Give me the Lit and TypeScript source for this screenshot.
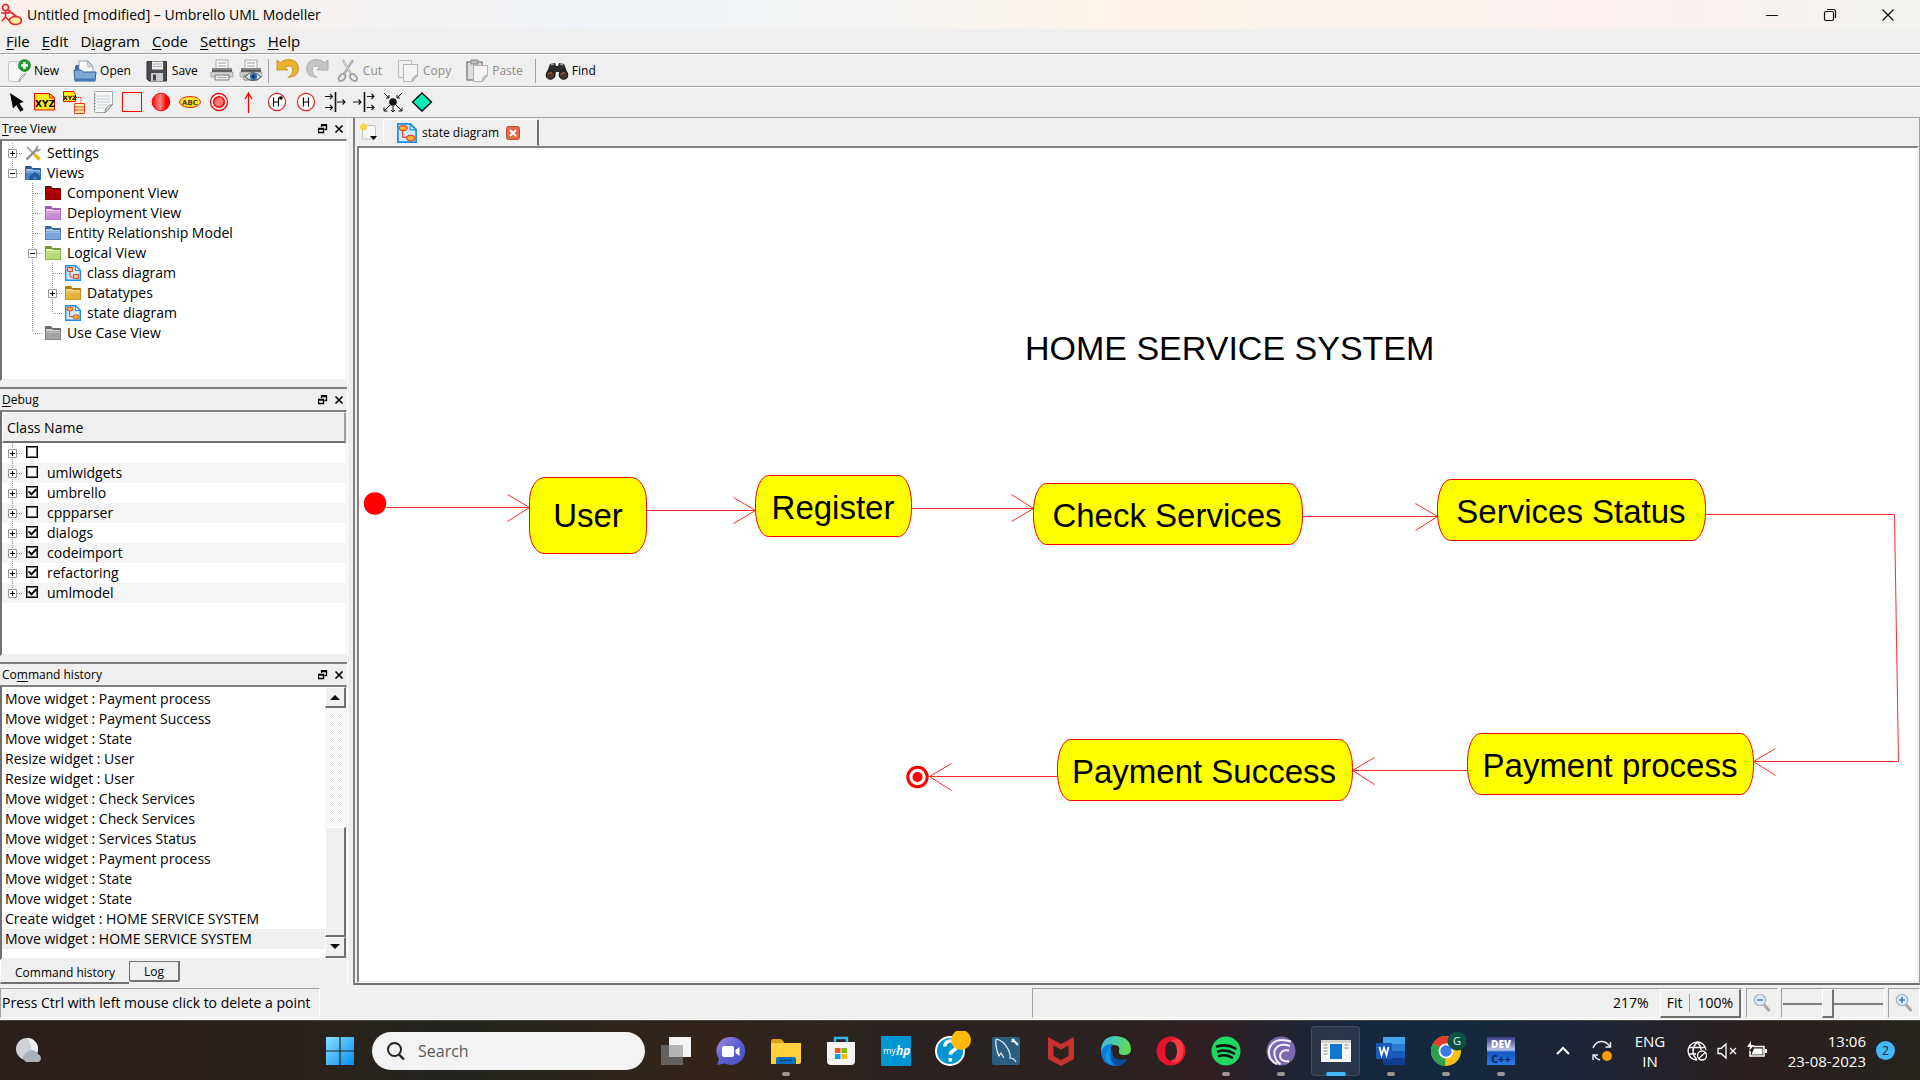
import { LitElement, html, svg, css, TemplateResult } from "lit";
import { customElement, property, state } from "lit/decorators.js";
import { classMap } from "lit/directives/class-map.js";

const icon = (w: number, h: number, body: TemplateResult) =>
  html`<svg width=${w} height=${h} viewBox="0 0 ${w} ${h}" aria-hidden="true">${body}</svg>`;

/* ---------- icons: 24px toolbar set ---------- */

const printer = svg`
  <path d="M6 1h12v9H6z" fill="#fafafa" stroke="#aaa"/><path d="M8 4h8M8 7h8" stroke="#999"/>
  <path d="M2 9h20v5H2z" fill="#555"/><path d="M2 9h20v2H2z" fill="#888"/>
  <path d="M1 13h22v5H1z" fill="#d4d4d4" stroke="#888" stroke-width=".6"/>
  <path d="M5 16h14v5H5z" fill="#eee" stroke="#777"/><path d="M7 18.5h10" stroke="#aaa"/>`;

const ICONS: Record<string, TemplateResult> = {
  new: icon(24, 24, svg`
    <path d="M1.500 4.500q0-2 2-2h15v12l-6 8h-9q-2 0-2-2z" fill="#f4f5f4" stroke="#c4c6c4"/>
    <path d="M12 22.500q1-6 6.500-7.500z" fill="#fff" stroke="#9a9a9a"/>
    <circle cx="17.500" cy="6.500" r="6" fill="#1f9a2b" stroke="#0c7a18" stroke-width=".6"/>
    <path d="M17.500 3v7M14 6.500h7" stroke="#fff" stroke-width="2.400"/>`),
  open: icon(24, 24, svg`
    <path d="M2 12V7.500q0-1.500 1.500-1.500H9v6z" fill="#3a6ba6"/>
    <path d="M6 14V2h9l5 5v7z" fill="#fafafa" stroke="#8fa3bd"/><path d="M14 2l1 6 5-.5z" fill="#ddd" stroke="#999" stroke-width=".6"/>
    <path d="M1 11h7l2 2h13l-1 9H2z" fill="#7ea8d8" stroke="#2f619c"/><path d="M1.500 19.500h21V22h-21z" fill="#4478b4"/>`),
  save: icon(24, 24, svg`
    <path d="M2 2.500h19.500v19.500H4l-2-2z" fill="#4a4a50" stroke="#333"/>
    <path d="M7 2.500h11v8H7z" fill="#f1f1f4"/><path d="M8 5h9M8 7.500h9" stroke="#aaa"/>
    <path d="M6 14h12v8H6z" fill="#c9cdd1"/><path d="M8 15.500h3v6H8z" fill="#444"/>`),
  print: icon(24, 24, printer),
  preview: icon(24, 24, svg`${printer}
    <path d="M6 18q7-9 16 0-8 7-16 0z" fill="#dfeaf6" stroke="#555"/><circle cx="14.500" cy="17.500" r="3.600" fill="#2e6db0"/><circle cx="14.500" cy="17.500" r="1.400" fill="#12263e"/>`),
  undo: icon(24, 24, svg`
    <path d="M1 1v10h11L8.800 8q8-3 8 3.500 0 4.500-5 7 10.700-.5 10.700-9Q22 .500 12 .500q-4.500 0-7.500 3.300z" fill="#e9b32a" stroke="#b9870c" stroke-width=".8"/>`),
  redo: icon(24, 24, svg`
    <path d="M23 1v10H12l3.200-3q-8-3-8 3.500 0 4.500 5 7Q1.500 18 1.500 9.500 2 .500 12 .500q4.500 0 7.500 3.300z" fill="#c4c4c4" stroke="#a4a4a4" stroke-width=".8"/>`),
  cut: icon(24, 24, svg`
    <path d="M7 1l8 14M17 1L8 15" stroke="#b0b0b0" stroke-width="2.400" fill="none"/>
    <path d="M7.500 2l7 12" stroke="#e8e8e8" stroke-width=".8"/>
    <ellipse cx="6" cy="18.500" rx="4" ry="2.800" transform="rotate(-45 6 18.500)" fill="none" stroke="#999" stroke-width="1.800"/>
    <ellipse cx="17.500" cy="18.500" rx="4" ry="2.800" transform="rotate(45 17.500 18.500)" fill="none" stroke="#999" stroke-width="1.800"/>`),
  copy: icon(24, 24, svg`
    <path d="M2.500 1.500h13v17h-13z" fill="#f0f0f0" stroke="#bcbcbc"/>
    <path d="M7.500 5.500h14v11l-5 6h-9z" fill="#f5f5f5" stroke="#b4b4b4"/><path d="M16 22q.500-5 5.500-6z" fill="#ddd" stroke="#aaa"/>`),
  paste: icon(24, 24, svg`
    <path d="M2 3h15v18H2z" fill="#ddd" stroke="#8c8c8c" stroke-width="1.600"/><path d="M6 1h7v4H6z" fill="#bbb" stroke="#888"/>
    <path d="M8.500 6.500h14v10l-5 6h-9z" fill="#f4f4f4" stroke="#b0b0b0"/><path d="M17 22q.500-5 5.500-6z" fill="#ddd" stroke="#aaa"/>`),
  find: icon(24, 24, svg`
    <path d="M5 5l5-1 1 3h2l1-3 5 1 4 10v3q-3 4-8 0l-1-5h-3l-1 5q-5 4-9 0v-3z" fill="#2b2b2b"/>
    <path d="M6 6l3-1M15 5l3 1" stroke="#999" stroke-width="1.500"/>
    <circle cx="5.500" cy="16" r="4.300" fill="#4b332a" stroke="#111"/><circle cx="18.500" cy="16" r="4.300" fill="#4b332a" stroke="#111"/>
    <path d="M3 16q1-3 4-2M16 16q1-3 4-2" stroke="#b06b3d" fill="none"/>`),

  pointer: icon(24, 24, svg`<path d="M6 3l3 15.500 3.200-3.300 4.300 6.600 3-2-4-6.500 4.200-1.300z" fill="#000"/>`),
  note: icon(24, 24, svg`
    <path d="M1.500 3.500h15l5 4.500v12h-20z" fill="#ffee1d" stroke="#f00"/><path d="M16.500 3.500V8h5z" fill="#ffc21e" stroke="#f00"/>
    <text x="2" y="17" font-size="9" font-weight="700" font-family="DejaVu Sans" fill="#000">XYZ</text>`),
  anchor: icon(24, 24, svg`
    <path d="M1.500 1.500h10l2 3v7h-12z" fill="#ffee1d" stroke="#f00"/><text x="1" y="10" font-size="6" font-weight="700" font-family="DejaVu Sans">XYZ</text>
    <path d="M14 7.500h5v6" fill="none" stroke="#f00" stroke-dasharray="1 1"/>
    <path d="M12.500 13.500h10v10h-10z" fill="#fff4a0" stroke="#e33"/><path d="M12 17h11M12 20h11" stroke="#e33"/>`),
  page: icon(24, 24, svg`
    <path d="M3.500 2.500q0-1 1-1h17v13l-7 8h-10q-1 0-1-1z" fill="#f6f7f7" stroke="#a6a8a8"/>
    <path d="M6 6h13M6 9h13M6 12h13M6 15h10M6 18h7" stroke="#c3cdd6"/><path d="M14 22.500q.500-7 7.500-8z" fill="#e4e4e4" stroke="#888"/>
    <path d="M4 4v16" stroke="#777" stroke-dasharray="1 2"/>`),
  box: icon(24, 24, svg`<path d="M2.500 2.500h19v19h-19z" fill="none" stroke="#f00"/>`),
  ball: icon(24, 24, svg`<circle cx="12" cy="12" r="8.800" fill="url(#rg)" stroke="#f00"/><defs><linearGradient id="rg"><stop offset="0" stop-color="#f00"/><stop offset=".45" stop-color="#ff8b8b"/><stop offset=".8" stop-color="#f00"/></linearGradient></defs>`),
  abc: icon(24, 24, svg`<ellipse cx="12" cy="12" rx="10.500" ry="5.500" fill="#ffe921" stroke="#e22"/>
    <text x="4" y="15" font-size="7" font-weight="700" font-family="DejaVu Sans" fill="#532">ABC</text>`),
  target: icon(24, 24, svg`<circle cx="12" cy="12" r="8.500" fill="#fff" stroke="#f00" stroke-width="1.300"/><circle cx="12" cy="12" r="5.300" fill="#f77" stroke="#f00" stroke-width="1.600"/>`),
  up: icon(24, 24, svg`<path d="M12.500 23V3M9 9l3.500-6L16 9" fill="none" stroke="#f00" stroke-width="1.300"/>`),
  deep: icon(24, 24, svg`<circle cx="12" cy="12" r="8.600" fill="#fff" stroke="#d22" stroke-width="1.200"/><path d="M8.500 7.500v9M13.500 7.500v9M8.500 12h5M16 6v4M14.300 7l3.400 2M17.700 7l-3.400 2" stroke="#000" stroke-width="1.100" fill="none"/>`),
  shallow: icon(24, 24, svg`<circle cx="12" cy="12" r="8.600" fill="#fff" stroke="#d22" stroke-width="1.200"/><path d="M9.500 7.500v9M14.500 7.500v9M9.500 12h5" stroke="#000" stroke-width="1.200" fill="none"/>`),
  join: icon(24, 24, svg`<path d="M12.500 2v20" stroke="#111" stroke-width="1.600"/><path d="M2 6.500h7M2 17.500h7M14 12h8M7 4l2.500 2.500L7 9M7 15l2.500 2.500L7 20M19.500 9.500L22 12l-2.500 2.500" fill="none" stroke="#111" stroke-width="1.100"/>`),
  fork: icon(24, 24, svg`<path d="M12.500 2v20" stroke="#111" stroke-width="1.600"/><path d="M1 12h8M15 6.500h7M15 17.500h7M6.500 9.500L9 12l-2.500 2.500M19.500 4L22 6.500 19.500 9M19.500 15l2.500 2.500-2.500 2.500" fill="none" stroke="#111" stroke-width="1.100"/>`),
  junction: icon(24, 24, svg`<circle cx="12" cy="12" r="3.800" fill="#111"/><path d="M3 3l5 5M21 3l-5 5M8 5v3H5M16 5v3h3M9 15l-6 6M15 15l6 6M3 17.500V21h3.500M21 17.500V21h-3.500M12 16v6M10 20l2 2 2-2" fill="none" stroke="#111"/>`),
  diamond: icon(24, 24, svg`<path d="M12 3l9.500 9L12 21l-9.500-9z" fill="#00f0b8" stroke="#000" stroke-width="1.300"/>`),
};

/* ---------- 16px tree icons ---------- */

const folder = (light: string, base: string, dark: string, extra = svg``) => icon(16, 16, svg`
  <path d="M0 15V2q0-1 1-1h5l1.500 2H15q1 0 1 1v11z" fill=${dark}/>
  <path d="M1 4h6l1.500 1H15v1H1z" fill=${light}/><path d="M.5 6.500h15v8H.5z" fill=${base}/>
  <path d="M1 7h14" stroke=${light}/>${extra}`);

const diagramGlyph = (state: boolean, s = 16) => html`<svg width=${s} height=${s} viewBox="0 0 16 16" aria-hidden="true">
  <path d="M.7.700h10l4.600 4.600v10H.7z" fill="#cfe9ff" stroke="#1e90e8" stroke-width="1.400"/>
  <path d="M10.500 1v4.500H15z" fill="#fff" stroke="#1e90e8"/>
  ${state
    ? svg`<ellipse cx="5" cy="4" rx="3.200" ry="2" fill="#ffb52a" stroke="#e24b2a"/><path d="M4.500 6v5.500h3.500" fill="none" stroke="#e24b2a"/><ellipse cx="11" cy="12" rx="3.200" ry="2.200" fill="#ffb52a" stroke="#e24b2a"/>`
    : svg`<path d="M2.500 2.500h5v4h-5zM8.500 9.500h5v4h-5z" fill="#ffc59a" stroke="#e24b2a"/><path d="M5 7v5h3" fill="none" stroke="#e24b2a"/>`}
</svg>`;

const TREE_ICONS: Record<string, TemplateResult> = {
  tools: icon(16, 16, svg`<path d="M2 2l9 9" stroke="#aaa" stroke-width="2"/><path d="M10 10l4.500 4.500" stroke="#e8b512" stroke-width="3.400"/>
    <path d="M1.500 14.500L11 5" stroke="#8b8b8b" stroke-width="2.400"/><path d="M10 5q0-4 3.500-4.500L12.500 3l1.500 1.500L16 3.500Q15.500 7 11.500 6.500z" fill="#9a9a9a"/>`),
  home: folder("#9cc0ea", "#4b86c6", "#285c98", svg`<path d="M4.500 15v-4L10 7l5 4v4h-3.500v-3h-3v3z" fill="#255a94"/>`),
  red: folder("#c80000", "#a80000", "#6e0000"),
  violet: folder("#ecc8f2", "#c88ed8", "#9a5cae"),
  blue: folder("#b2cdf0", "#7ba5dc", "#35669f"),
  green: folder("#dcf3a8", "#b5dc78", "#719a3a"),
  amber: folder("#fbdc88", "#e6b23c", "#b07c14"),
  grey: folder("#cfcfcf", "#a4a4a4", "#6a6a6a"),
  classes: diagramGlyph(false),
  states: diagramGlyph(true),
};

/* ---------- taskbar icons, 32px ---------- */

const TASK_ICONS: Record<string, TemplateResult> = {
  start: icon(32, 32, svg`<defs><linearGradient id="wg" x2="1" y2="1"><stop offset="0" stop-color="#86e0ff"/><stop offset="1" stop-color="#0a8cf0"/></linearGradient></defs>
    <path d="M2 2h13.400v13.400H2zM16.600 2H30v13.400H16.600zM2 16.600h13.400V30H2zM16.600 16.600H30V30H16.600z" fill="url(#wg)"/>`),
  views: icon(32, 32, svg`<path d="M9 2h22v20H9z" fill="#f4f4f4"/><path d="M1 10h22v20H1z" fill="#6d6d6d" opacity=".85"/><path d="M9 10h14v12H9z" fill="#b4b4b4"/>`),
  chat: icon(32, 32, svg`<defs><linearGradient id="cg" x2="1" y2="1"><stop offset="0" stop-color="#a78be0"/><stop offset=".5" stop-color="#5b5fd0"/><stop offset="1" stop-color="#4650c0"/></linearGradient></defs>
    <path d="M16 2a14 14 0 1 1-6 26.600L2 30l2-6A14 14 0 0 1 16 2z" fill="url(#cg)"/><rect x="7" y="11" width="12" height="11" rx="2" fill="#fff"/><path d="M20.500 15l4-3v9l-4-3z" fill="#fff"/>`),
  explorer: icon(32, 32, svg`<path d="M1 6q0-2 2-2h8l3 3v6H1z" fill="#e0a010"/><path d="M1 8h30v19q0 2-2 2H1z" fill="#ffcf3c"/><path d="M6 29v-5q0-2 2-2h16q2 0 2 2v5z" fill="#0a6cc0"/><path d="M10 25.500h12" stroke="#083f78" stroke-width="1.200"/>`),
  store: icon(32, 32, svg`<path d="M10 8V3h12v5" fill="none" stroke="#38b6f0" stroke-width="2.400"/><path d="M2 7h28v19q0 4-4 4H6q-4 0-4-4z" fill="#f3f3f3"/>
    <path d="M10 13h5.500v5H10z" fill="#f25022"/><path d="M16.500 13H22v5h-5.500z" fill="#7fba00"/><path d="M10 19h5.500v5H10z" fill="#00a4ef"/><path d="M16.500 19H22v5h-5.500z" fill="#ffb900"/>`),
  myhp: icon(32, 32, svg`<rect x="1" y="1" width="30" height="30" rx="1" fill="#0096d6"/><text x="3" y="19" font-family="Open Sans, sans-serif" font-size="9" fill="#fff">my</text><text x="16" y="20" font-family="Open Sans, sans-serif" font-size="12" font-style="italic" font-weight="700" fill="#fff">hp</text>`),
  support: icon(40, 40, svg`<circle cx="19" cy="20" r="14" fill="#0096d6" stroke="#fff" stroke-width="2"/><path d="M13.500 15.500q1-5.500 6-5.500 6 0 6 5 0 3-3.500 4.800-2.500 1.300-2.500 4M19.300 27v3.500" fill="none" stroke="#fff" stroke-width="3.600"/><circle cx="30" cy="9" r="10" fill="#ffb90a"/>`),
  mysql: icon(32, 32, svg`<rect x="2" y="2" width="28" height="28" rx="2" fill="#2c5e82"/><path d="M6 4q7 1 12 10 3 6 2 9 4 0 6 4M6 4q-1 8 3 17l2-3 3 5" fill="none" stroke="#e8f2fa" stroke-width="1.200"/><path d="M22 4l6 6M24 4l-2 3" stroke="#fff" stroke-width="2"/>`),
  mcafee: icon(32, 32, svg`<path d="M3 2l13 7 13-7v22l-13 7-13-7z" fill="#c8322e"/><path d="M8.500 10.500l7.500 4 7.500-4V21L16 25l-7.500-4z" fill="#2a2220"/>`),
  edge: icon(32, 32, svg`<defs><linearGradient id="eg" x2="1" y2=".3"><stop offset="0" stop-color="#35b8f0"/><stop offset="1" stop-color="#5fdc5a"/></linearGradient></defs>
    <path d="M1 15Q2 1 16 1q14 1 15 13 0 6-7 6-6 0-5-4 2-6-5-6-9 0-13 8z" fill="url(#eg)"/><path d="M1 16Q5 8 13 9q-4 5 0 12 5 7 14 3-4 7-11 7Q1 30 1 16z" fill="#0f7ad8"/><path d="M11 12q-5 9 2 18-4-1-6-3Q3 18 11 12z" fill="#0b9be4"/><path d="M12 15q0 10 10 10 3 0 5-1-4 7-11 7-8-6-4-16z" fill="#0b4f9e"/>`),
  opera: icon(32, 32, svg`<path fill-rule="evenodd" d="M16 1.500a14.500 14.500 0 1 0 0 29 14.500 14.500 0 0 0 0-29zm0 5c4 0 6 4 6 9.500s-2 9.500-6 9.500-6-4-6-9.500 2-9.500 6-9.500z" fill="#e8132b"/><path d="M16 6q8-6 12 4 2 12-5 17-4 2-7-1.500 6-1 6-9.500T16 6z" fill="#ff4a4a" opacity=".8"/>`),
  spotify: icon(32, 32, svg`<circle cx="16" cy="16" r="14.500" fill="#1ed760"/><path d="M7 11.500q10-3 18.500 2M8 16.500q8.500-2.500 16 2M9 21q7-2 13 1.600" fill="none" stroke="#101010" stroke-width="2.500" stroke-linecap="round"/>`),
  torrent: icon(32, 32, svg`<circle cx="16" cy="16" r="14.500" fill="#7b68b0"/><path d="M26 6.500Q8 1 4 15q-1 10 8 14M25 11Q13 7 9.500 16q-1 8 6 13.500M24 15.500q-8-1-9 5 0 6 9 6" fill="none" stroke="#f3f0fa" stroke-width="2"/>`),
  app: icon(32, 32, svg`<path d="M1 5h30v22H1z" fill="#f5f5f5"/><path d="M1 5h30v3H1z" fill="#d5d0c8"/><path d="M10 9h12v15H10z" fill="#0f77cf"/><path d="M3.500 10h4M3.500 13h4M3.500 16h4M3.500 19h4M24.500 10h4M24.500 13h4" stroke="#888"/>`),
  word: icon(32, 32, svg`<path d="M8 2h22v7H8z" fill="#41a5ee"/><path d="M8 9h22v7H8z" fill="#2b7cd3"/><path d="M8 16h22v7H8z" fill="#185abd"/><path d="M8 23h22v7H8z" fill="#103f91"/><rect x="1" y="8" width="16" height="16" rx="1" fill="#185abd"/><path d="M4.500 12l2 8 2.500-7 2.500 7 2-8" fill="none" stroke="#fff" stroke-width="1.800"/>`),
  chrome: icon(40, 40, svg`<circle cx="20" cy="20" r="15" fill="#fbc116"/><path d="M20 20L7 12.500A15 15 0 0 1 33 12.500H20z" fill="#e33b2e"/><path d="M7 12.500L20 20l-1 15A15 15 0 0 1 7 12.500z" fill="#2aa14a"/><circle cx="20" cy="20" r="7.500" fill="#fff"/><circle cx="20" cy="20" r="5.700" fill="#3b78e8"/><circle cx="31" cy="10" r="9.500" fill="#0b5244"/><text x="31" y="14" text-anchor="middle" font-family="Open Sans, sans-serif" font-size="11" fill="#dfe">G</text>`),
  dev: icon(32, 32, svg`<defs><linearGradient id="dg" y2="1" x2="0"><stop offset="0" stop-color="#3b3b86"/><stop offset=".45" stop-color="#b9c3e6"/><stop offset=".55" stop-color="#1458c8"/><stop offset="1" stop-color="#2f7bea"/></linearGradient></defs><path d="M2 2h28v28H2z" fill="url(#dg)"/>
    <text x="16" y="13" text-anchor="middle" font-family="Open Sans, sans-serif" font-weight="800" font-size="10" fill="#fff">DEV</text><text x="16" y="28" text-anchor="middle" font-family="Open Sans, sans-serif" font-weight="800" font-size="11" fill="#0b2a6a">C++</text>`),
};

/* ---------- data ---------- */

const MENUS: [string, string, string][] = [
  ["", "F", "ile"], ["", "E", "dit"], ["D", "i", "agram"], ["", "C", "ode"], ["", "S", "ettings"], ["", "H", "elp"],
];

interface Action { id: string; label?: string; title?: string; off?: boolean }
const ACTIONS: (Action | null)[] = [
  { id: "new", label: "New" }, { id: "open", label: "Open" }, { id: "save", label: "Save" },
  { id: "print", title: "Print" }, { id: "preview", title: "Print preview" }, null,
  { id: "undo", title: "Undo" }, { id: "redo", title: "Redo", off: true },
  { id: "cut", label: "Cut", off: true }, { id: "copy", label: "Copy", off: true }, { id: "paste", label: "Paste", off: true }, null,
  { id: "find", label: "Find" },
];

const TOOLS: [string, string][] = [
  ["pointer", "Select"], ["note", "Note"], ["anchor", "Anchor"], ["page", "Label"], ["box", "Box"], ["ball", "Initial state"],
  ["abc", "State"], ["target", "End state"], ["up", "State transition"], ["deep", "Deep history"], ["shallow", "Shallow history"],
  ["join", "Join"], ["fork", "Fork"], ["junction", "Junction"], ["diamond", "Choice"],
];

/* Guide letters: "." blank, "|" passing line, "T" tee, "L" last branch */
interface Node { guides: string; box?: "+" | "-"; icon: string; label: string }
const TREE: Node[] = [
  { guides: "T", box: "+", icon: "tools", label: "Settings" },
  { guides: "L", box: "-", icon: "home", label: "Views" },
  { guides: ".T", icon: "red", label: "Component View" },
  { guides: ".T", icon: "violet", label: "Deployment View" },
  { guides: ".T", icon: "blue", label: "Entity Relationship Model" },
  { guides: ".T", box: "-", icon: "green", label: "Logical View" },
  { guides: ".|T", icon: "classes", label: "class diagram" },
  { guides: ".|T", box: "+", icon: "amber", label: "Datatypes" },
  { guides: ".|L", icon: "states", label: "state diagram" },
  { guides: ".L", icon: "grey", label: "Use Case View" },
];

const DEBUG: [string, boolean][] = [
  ["", false], ["umlwidgets", false], ["umbrello", true], ["cppparser", false],
  ["dialogs", true], ["codeimport", true], ["refactoring", true], ["umlmodel", true],
];

const HISTORY = [
  "Move widget : Payment process", "Move widget : Payment Success", "Move widget : State", "Resize widget : User",
  "Resize widget : User", "Move widget : Check Services", "Move widget : Check Services", "Move widget : Services Status",
  "Move widget : Payment process", "Move widget : State", "Move widget : State",
  "Create widget : HOME SERVICE SYSTEM", "Move widget : HOME SERVICE SYSTEM",
];

interface StateBox { x: number; y: number; w: number; h: number; tx: number; ty: number; label: string; rx: number; ry: number }
const STATES: StateBox[] = [
  { x: 170, y: 329, w: 117, h: 76, rx: 15, ry: 24, tx: 229, ty: 379, label: "User" },
  { x: 396, y: 327, w: 156, h: 61, rx: 13, ry: 28, tx: 474, ty: 371, label: "Register" },
  { x: 674, y: 335, w: 269, h: 61, rx: 13, ry: 28, tx: 808, ty: 379, label: "Check Services" },
  { x: 1078, y: 331, w: 268, h: 61, rx: 13, ry: 28, tx: 1212, ty: 375, label: "Services Status" },
  { x: 1108, y: 585, w: 286, h: 61, rx: 13, ry: 28, tx: 1251, ty: 629, label: "Payment process" },
  { x: 698, y: 591, w: 295, h: 61, rx: 13, ry: 28, tx: 845, ty: 635, label: "Payment Success" },
];
const EDGES = [
  "M27 359H170M148 346L170 359 148 373",
  "M287 362H396M374 349L396 362 374 375",
  "M552 360H674M652 346L674 360 652 373",
  "M943 368H1078M1056 355L1078 368 1056 382",
  "M1346 366H1535L1539 613H1394M1416 600L1394 613 1416 627",
  "M1108 622H993M1015 609L993 622 1015 636",
  "M698 628H570M592 615L570 628 592 642",
];

const TASKS: [string, string, string][] = [
  ["views", "Task view", ""], ["chat", "Chat", ""], ["explorer", "File Explorer", "open"], ["store", "Microsoft Store", ""],
  ["myhp", "myHP", ""], ["support", "HP Support Assistant", ""], ["mysql", "MySQL Workbench", ""], ["mcafee", "McAfee", ""],
  ["edge", "Edge", ""], ["opera", "Opera", ""], ["spotify", "Spotify", "open"], ["torrent", "BitTorrent", "open"],
  ["app", "Umbrello", "active"], ["word", "Word", "open"], ["chrome", "Chrome", "open"], ["dev", "Dev-C++", "open"],
];

const base = css`
  * { box-sizing: border-box; }
  svg { display: block; flex: none; }
  button { font: inherit; color: inherit; background: none; border: 0; padding: 0; margin: 0; }
  ul { list-style: none; margin: 0; padding: 0; }
`;

const guide = (kind: string, box?: string) => {
  const up = kind !== ".";
  const down = kind === "T" || kind === "|";
  const arm = kind === "T" || kind === "L";
  const mark = svg`
    ${up ? svg`<path d="M10.500 0V10" stroke="#999" stroke-dasharray="1 1"/>` : ""}
    ${down ? svg`<path d="M10.500 10V20" stroke="#999" stroke-dasharray="1 1"/>` : ""}
    ${arm ? svg`<path d="M11 10.500H20" stroke="#999" stroke-dasharray="1 1"/>` : ""}
    ${box ? svg`<path d="M6.500 6.500h8v8h-8z" fill="#fff" stroke="#999"/><path d=${box === "+" ? "M8 10.500h5M10.500 8v5" : "M8 10.500h5"} stroke="#000"/>` : ""}`;
  return icon(20, 20, mark);
};

/* ---------- dock panel ---------- */

@customElement("dock-panel")
class DockPanel extends LitElement {
  @property() lead = "";
  @property() key = "";
  @property() rest = "";

  static styles = [base, css`
    :host { display: flex; flex-direction: column; min-height: 0; }
    .bar { display: flex; align-items: center; height: 21px; padding: 0 0 0 2px; flex: none; font-size: 12px; }
    .name { flex: 1; }
    .key { text-decoration: underline; text-underline-offset: 2px; }
    .tool { width: 16px; height: 16px; display: grid; place-items: center; }
    .frame { flex: 1; min-height: 0; display: flex; flex-direction: column; background: #fff; overflow: hidden;
      border: 2px solid; border-color: #808080 #f0f0f0 #f0f0f0 #707070; border-right-width: 1px; }
  `];

  render() {
    return html`
      <div class="bar">
        <span class="name">${this.lead}<span class="key">${this.key}</span>${this.rest}</span>
        <button class="tool" aria-label="Float">${icon(10, 10, svg`<path d="M3.500 3V.500h5v5H6.500M3 1.500h6M.5 4.500h5v4h-5zM.5 5h5" fill="none" stroke="#000" stroke-width="1.300"/>`)}</button>
        <button class="tool" aria-label="Close">${icon(10, 10, svg`<path d="M1.500 1.500l7 7M8.500 1.500l-7 7" stroke="#000" stroke-width="1.600"/>`)}</button>
      </div>
      <div class="frame"><slot></slot></div>`;
  }
}

/* ---------- state diagram ---------- */

@customElement("state-diagram")
class StateDiagram extends LitElement {
  static styles = [base, css`
    :host { display: block; min-height: 0; overflow: hidden; background: #fff; }
    .canvas { width: 100%; height: 100%; }
    .label { font-family: "Liberation Sans", Arial, sans-serif; font-size: 33px; text-anchor: middle; fill: #000; }
    .title { font-family: "Liberation Sans", Arial, sans-serif; font-size: 34px; fill: #000; }
    .edge { fill: none; stroke: #ff2a2a; stroke-width: 1; }
    .state { fill: #ff0; stroke: #f00; stroke-width: 1; }
  `];

  render() {
    return html`<svg class="canvas" role="img" aria-label="State diagram">
      <text class="title" x="666" y="212">HOME SERVICE SYSTEM</text>
      ${EDGES.map((d) => svg`<path class="edge" d=${d} transform="translate(.5 .5)"/>`)}
      ${STATES.map((s) => svg`
        <rect class="state" x=${s.x + 0.5} y=${s.y + 0.5} width=${s.w} height=${s.h} rx=${s.rx} ry=${s.ry}/>
        <text class="label" x=${s.tx} y=${s.ty}>${s.label}</text>`)}
      <circle cx="16" cy="355.500" r="11.300" fill="#f00"/>
      <circle cx="558.500" cy="629" r="9.700" fill="#fff" stroke="#f00" stroke-width="3"/>
      <circle cx="558.500" cy="629" r="5" fill="#f00"/>
    </svg>`;
  }
}

/* ---------- taskbar ---------- */

@customElement("task-bar")
class TaskBar extends LitElement {
  static styles = [base, css`
    :host { display: grid; grid-template-columns: 312px auto 1fr; align-items: center; height: 60px; color: #fff; font-size: 14px;
      background: linear-gradient(90deg, #2a1f1b, #2b211c 16%, #22241e 24%, #33241a 36%, #2b2220 47%, #2a2120 58%, #301f22 63%, #14273f 71%, #14283f 75%, #1e2535 83%, #2a1f1e 91%, #26231d);
      border-top: 1px solid #45453f; }
    .weather { justify-self: start; padding-left: 13px; }
    .group { display: flex; align-items: center; }
    .item { position: relative; width: 55px; height: 50px; display: grid; place-items: center; }
    .item.active::before { content: ""; position: absolute; inset: 0 3px; background: #ffffff14; border: 1px solid #ffffff1c; border-radius: 4px; }
    .item svg { position: relative; }
    .item.open::after, .item.active::after { content: ""; position: absolute; bottom: 0; left: 50%; width: 8px; height: 4px; margin-left: -4px; border-radius: 2px; background: #9b9693; }
    .item.active::after { width: 20px; margin-left: -10px; background: #43b6fb; }
    .search { display: flex; align-items: center; gap: 12px; width: 273px; height: 38px; margin: 0 3px 0 5px; padding: 0 14px; border-radius: 19px; background: #f3f3f3; }
    .search input { flex: 1; min-width: 0; border: 0; outline: 0; background: none; padding: 0; font: inherit; font-size: 16px; color: #444; }
    .search input::placeholder { color: #5a5a5a; opacity: 1; }
    .tray { justify-self: end; display: flex; align-items: center; gap: 10px; padding-right: 25px; }
    .tray .up { margin-right: 8px; }
    .lang { width: 54px; text-align: center; line-height: 20px; }
    .clock { width: 89px; text-align: right; line-height: 20px; white-space: nowrap; }
    .lang, .clock { font-size: 15px; }
    .count { width: 19px; height: 19px; border-radius: 50%; background: #43b9fb; color: #10202c; font-size: 12px; line-height: 19px; text-align: center; }
  `];

  render() {
    return html`
      <button class="weather" aria-label="Weather">${icon(32, 32, svg`<circle cx="14" cy="14" r="11" fill="#cfd3d8"/><path d="M14 3a11 11 0 0 1 0 22 16 16 0 0 0 0-22z" fill="#eceef0"/><path d="M13 27a5 5 0 0 1 0-9 7 7 0 0 1 12 1 4.500 4.500 0 0 1 1 8z" fill="#a9b1ba"/>`)}</button>
      <div class="group">
        <button class="item" aria-label="Start">${TASK_ICONS.start}</button>
        <label class="search">${icon(20, 20, svg`<circle cx="8.500" cy="8.500" r="6.500" fill="none" stroke="#222" stroke-width="2"/><path d="M13 13.500l5 5" stroke="#222" stroke-width="2.400"/>`)}
          <input type="text" placeholder="Search" aria-label="Search" /></label>
        ${TASKS.map(([id, name, mode]) => html`<button class="item ${mode}" aria-label=${name}>${TASK_ICONS[id]}</button>`)}
      </div>
      <div class="tray">
        <button class="up" aria-label="Hidden icons">${icon(20, 20, svg`<path d="M4 13l6-6 6 6" fill="none" stroke="#fff" stroke-width="2"/>`)}</button>
        <button aria-label="Updates">${icon(22, 22, svg`<path d="M2 8Q5 1 11 1.500q5 .5 8 5M19.500 2v5h-5M9 20Q5 19 3 15M2 20v-5h5" fill="none" stroke="#eee" stroke-width="1.400"/><circle cx="16" cy="16" r="5" fill="#ff9a0a"/>`)}</button>
        <div class="lang">ENG<br />IN</div>
        <button aria-label="Network">${icon(20, 20, svg`<g fill="none" stroke="#fff" stroke-width="1.300"><path d="M10 19A9 9 0 1 1 19 9M10 1q-8 9 0 18M10 1q4 4 4 8M2 6.500h16M1.500 13H9"/><circle cx="15" cy="14.500" r="4.500"/><path d="M12 17.500l6-6"/></g>`)}</button>
        <button aria-label="Muted">${icon(20, 20, svg`<path d="M1 7.500h3l5-4.500v14L4 12.500H1zM13 7l6 6M19 7l-6 6" fill="none" stroke="#fff" stroke-width="1.300"/>`)}</button>
        <button aria-label="Battery">${icon(20, 20, svg`<path d="M6 5.500h11v9.500H3V10" fill="none" stroke="#fff" stroke-width="1.500"/><path d="M7 7.500h8.500v6h-11z" fill="#fff"/><path d="M18 8h2v4h-2zM4 0L0 6h3l-1 4 5-6H4z" fill="#fff"/>`)}</button>
        <div class="clock">13:06<br />23-08-2023</div>
        <div class="count">2</div>
      </div>`;
  }
}

/* ---------- application window ---------- */

@customElement("app-root")
class AppRoot extends LitElement {
  @state() zoom = 44;

  static styles = [base, css`
    :host { display: flex; flex-direction: column; height: 100vh; overflow: hidden; background: #efefef; color: #000;
      font: 14px/20px "Open Sans", "Noto Sans", sans-serif; }
    .titlebar { display: flex; align-items: center; height: 29px; flex: none; padding: 0 3px 0 1px;
      background: linear-gradient(90deg, #fbf0ea, #f6f1ee 14%, #eff3f7 30%, #f2f4f5 42%, #fdf3e9 58%, #faf2ec 70%, #fbf0ef 83%, #f3f3ef); }
    .caption { flex: 1; margin-left: 4px; }
    .winbtn { width: 58px; height: 29px; display: grid; place-items: center; }
    .menubar { display: flex; height: 25px; flex: none; padding-left: 6px; gap: 12px; align-items: center; border-bottom: 1px solid #a0a0a0; font-size: 15px; }
    .key { text-decoration: underline; text-underline-offset: 2px; }
    .toolbar { display: flex; align-items: center; height: 33px; flex: none; padding-left: 2px; font-size: 12px;
      border-top: 1px solid #fff; border-bottom: 1px solid #a0a0a0; }
    .action { display: flex; align-items: center; gap: 3px; height: 26px; padding: 0 2px 0 3px; }
    .action.text { padding: 0 9px 0 5px; }
    .action.off { color: #8c8c8c; }
    .sep { width: 1px; height: 24px; margin: 0 4px 0 3px; background: #a0a0a0; }
    .toolbar.tools { height: 31px; padding-left: 1px; align-items: flex-start; }
    .tool { width: 29px; height: 28px; display: grid; place-items: center; }
    .work { flex: 1; min-height: 0; display: grid; grid-template-columns: 348px minmax(0, 1fr); column-gap: 5px; }
    .docks { min-height: 0; display: grid; grid-template-rows: minmax(0, 269fr) minmax(0, 275fr) minmax(0, 323fr); border-right: 1px solid #fff; }
    .docks dock-panel { border-top: 2px solid #808080; padding-bottom: 6px; }
    .docks dock-panel:first-child { border-top: 0; }
    .tree { padding-top: 2px; }
    .row { display: flex; align-items: center; height: 20px; white-space: nowrap; flex: none; }
    .row .pic { margin: 0 6px 0 3px; }
    .header { height: 31px; flex: none; padding: 0 4px; line-height: 30px; background: #efefef; border: 1px solid; border-color: #fff #a0a0a0 #707070 #fff; border-bottom-width: 2px; border-right-width: 2px; }
    .debug .row:nth-child(even) { background: #f5f5f5; }
    .check { appearance: none; width: 12px; height: 12px; border: 1px solid #000; outline: 1px solid #777; outline-offset: -2px; margin: 0 9px 2px 4px; background: #fff; position: relative; }
    .check:checked::after { content: ""; position: absolute; left: 3px; top: 0; width: 3px; height: 6px; border: solid #000; border-width: 0 2px 2px 0; transform: rotate(45deg); }
    .bottom { min-height: 0; display: flex; flex-direction: column; }
    .bottom dock-panel, .bottom dock-panel:first-child { flex: 1; padding-bottom: 1px; border-top: 2px solid #808080; }
    .history { display: flex; flex: 1; min-height: 0; }
    .entries { flex: 1; overflow: hidden; padding-top: 2px; }
    .entries li { padding-left: 3px; height: 20px; white-space: nowrap; }
    .entries li.current { background: #efefef; }
    .scroll { width: 21px; display: flex; flex-direction: column; background: repeating-conic-gradient(#fff 0 25%, #efefef 0 50%) 0 0 / 2px 2px; }
    .raised { background: #efefef; border: 1px solid; border-color: #fff #707070 #707070 #fff; border-right-width: 2px; border-bottom-width: 2px; }
    .arrow { height: 21px; flex: none; display: grid; place-items: center; }
    .track { flex: 1; display: flex; flex-direction: column; justify-content: flex-end; }
    .thumb { height: 48%; }
    .tabs { display: flex; align-items: flex-start; height: 24px; flex: none; font-size: 12px; }
    .tab { height: 23px; padding: 0 14px; line-height: 24px; }
    .tab.idle { height: 21px; line-height: 20px; border: 1px solid #707070; border-right-width: 2px; border-bottom-width: 2px; border-radius: 0 0 2px 2px; }
    .tab.on { border-bottom: 2px solid #707070; border-left: 1px solid #fff; }
    .main { min-height: 0; display: flex; flex-direction: column; border: 2px solid #808080; border-top: 0; border-right-width: 1px; border-color: #808080 #a0a0a0 #707070 #808080; }
    .doctabs { display: flex; align-items: flex-end; height: 28px; flex: none; padding-left: 4px; font-size: 12px; }
    .newtab { width: 24px; height: 26px; }
    .doctab { display: flex; align-items: center; gap: 5px; height: 27px; padding: 0 17px 0 13px; border: 1px solid; border-color: #fff #707070 transparent #fff; border-right-width: 2px; border-radius: 2px 2px 0 0; }
    .doctab button { margin-left: 2px; }
    .main state-diagram { flex: 1; border: 2px solid; border-color: #808080 #f0f0f0 #f0f0f0 #808080; margin-left: 2px; }
    .status { display: flex; height: 35px; flex: none; padding: 3px 0 1px; gap: 3px; border-bottom: 1px solid #fff; }
    .cell { display: flex; align-items: center; border: 1px solid; border-color: #a0a0a0 #fff #fff #a0a0a0; }
    .hint { width: 320px; padding-left: 1px; white-space: nowrap; }
    .gap { flex: 1; }
    .info { width: 711px; justify-content: flex-end; padding-right: 1px; gap: 11px; }
    .fit { display: flex; align-items: center; height: 29px; padding: 0 6px; }
    .fit .sep { height: 18px; margin: 0 7px; }
    .glass { width: 32px; justify-content: center; }
    .slide { width: 104px; }
    .range { appearance: none; width: 100%; height: 29px; margin: 0 1px; background: linear-gradient(#808080, #808080) 0 14px / 100% 2px no-repeat; }
    .range::-webkit-slider-thumb { appearance: none; width: 12px; height: 29px; background: #efefef; border: 1px solid; border-color: #fff #707070 #707070 #fff; border-right-width: 2px; border-bottom-width: 2px; }
  `];

  private lens(plus: boolean) {
    return icon(18, 20, svg`<path d="M10.500 11l6 7" stroke="#a8a8a8" stroke-width="3"/><circle cx="7" cy="7" r="5.600" fill="#dceaf7" stroke="#a9b7c4" stroke-width="1.400"/>
      <path d=${plus ? "M4 7h6M7 4v6" : "M4 7h6"} stroke="#4d7cb0" stroke-width="1.500"/>`);
  }

  render() {
    return html`
      <header class="titlebar">
        ${icon(22, 24, svg`<g fill="none" stroke="#e8242a" stroke-width="1.600"><circle cx="4.500" cy="4.500" r="3"/><path d="M4.500 8v6M0 10h9M4.500 14L1 18M4.500 14l4 4M7 7l9 7"/><ellipse cx="14.500" cy="17.500" rx="6" ry="4" fill="#ffee9a"/></g>`)}
        <span class="caption">Untitled [modified] – Umbrello UML Modeller</span>
        <button class="winbtn" aria-label="Minimize">${icon(12, 12, svg`<path d="M0 6.500h12" stroke="#111"/>`)}</button>
        <button class="winbtn" aria-label="Restore">${icon(14, 14, svg`<rect x="1.500" y="3.500" width="9" height="9" rx="1.500" fill="none" stroke="#111" stroke-width="1.200"/><path d="M4 1.500h6.500q2 0 2 2V10" fill="none" stroke="#111" stroke-width="1.200"/>`)}</button>
        <button class="winbtn" aria-label="Close">${icon(12, 12, svg`<path d="M.5.500l11 11M11.500.500l-11 11" stroke="#111" stroke-width="1.200"/>`)}</button>
      </header>
      <nav class="menubar">${MENUS.map(([a, k, b]) => html`<button>${a}<span class="key">${k}</span>${b}</button>`)}</nav>
      <div class="toolbar">
        ${ACTIONS.map((a) => a === null ? html`<span class="sep"></span>`
          : html`<button class=${classMap({ action: true, text: !!a.label, off: !!a.off })} aria-label=${a.label ?? a.title ?? ""}>${ICONS[a.id]}${a.label ?? ""}</button>`)}
      </div>
      <div class="toolbar tools">${TOOLS.map(([id, name]) => html`<button class="tool" aria-label=${name}>${ICONS[id]}</button>`)}</div>

      <div class="work">
        <aside class="docks">
          <dock-panel key="T" rest="ree View">
            <ul class="tree">${TREE.map((n) => html`<li class="row">
              ${[...n.guides].map((g, i) => guide(g, i === n.guides.length - 1 ? n.box : undefined))}
              <span class="pic">${TREE_ICONS[n.icon]}</span>${n.label}</li>`)}</ul>
          </dock-panel>
          <dock-panel key="D" rest="ebug">
            <div class="header">Class Name</div>
            <ul class="debug">${DEBUG.map(([name, on], i) => html`<li class="row">
              ${guide(i === DEBUG.length - 1 ? "L" : "T", "+")}
              <input class="check" type="checkbox" id="dbg${i}" .checked=${on} aria-label=${name || "unnamed"} /><label for="dbg${i}">${name}</label></li>`)}</ul>
          </dock-panel>
          <div class="bottom">
            <dock-panel lead="Co" key="m" rest="mand history">
              <div class="history">
                <ul class="entries">${HISTORY.map((h, i) => html`<li class=${classMap({ current: i === HISTORY.length - 1 })}>${h}</li>`)}</ul>
                <div class="scroll">
                  <button class="raised arrow" aria-label="Scroll up">${icon(10, 6, svg`<path d="M0 6l5-5 5 5z"/>`)}</button>
                  <div class="track"><div class="raised thumb"></div></div>
                  <button class="raised arrow" aria-label="Scroll down">${icon(10, 6, svg`<path d="M0 0l5 5 5-5z"/>`)}</button>
                </div>
              </div>
            </dock-panel>
            <div class="tabs"><button class="tab on">Command history</button><button class="tab idle">Log</button></div>
          </div>
        </aside>
        <main class="main">
          <div class="doctabs">
            <button class="newtab" aria-label="New diagram">${icon(20, 22, svg`<path d="M3.500 5.500q0-2 2-2h9q2 0 2 2V17h-13z" fill="#f6f6f2" stroke="#c4c4c4"/><circle cx="4.500" cy="5" r="3.500" fill="#f6d74a"/><path d="M11 14h7l-3.500 4z"/>`)}</button>
            <div class="doctab">${diagramGlyph(true, 20)}<span>state diagram</span>
              <button aria-label="Close tab">${icon(14, 14, svg`<rect x=".5" y=".5" width="13" height="13" rx="2" fill="#e2694a" stroke="#c44a30"/><path d="M4 4l6 6M10 4l-6 6" stroke="#fff" stroke-width="2"/>`)}</button></div>
          </div>
          <state-diagram></state-diagram>
        </main>
      </div>

      <footer class="status">
        <div class="cell hint">Press Ctrl with left mouse click to delete a point</div>
        <span class="gap"></span>
        <div class="cell info"><span>217%</span>
          <div class="raised fit"><button>Fit</button><span class="sep"></span><button>100%</button></div></div>
        <button class="cell glass" aria-label="Zoom out">${this.lens(false)}</button>
        <div class="cell slide"><input class="range" type="range" min="0" max="100" aria-label="Zoom" .value=${String(this.zoom)}
          @input=${(e: Event) => (this.zoom = Number((e.target as HTMLInputElement).value))} /></div>
        <button class="cell glass" aria-label="Zoom in">${this.lens(true)}</button>
      </footer>
      <task-bar></task-bar>`;
  }
}
